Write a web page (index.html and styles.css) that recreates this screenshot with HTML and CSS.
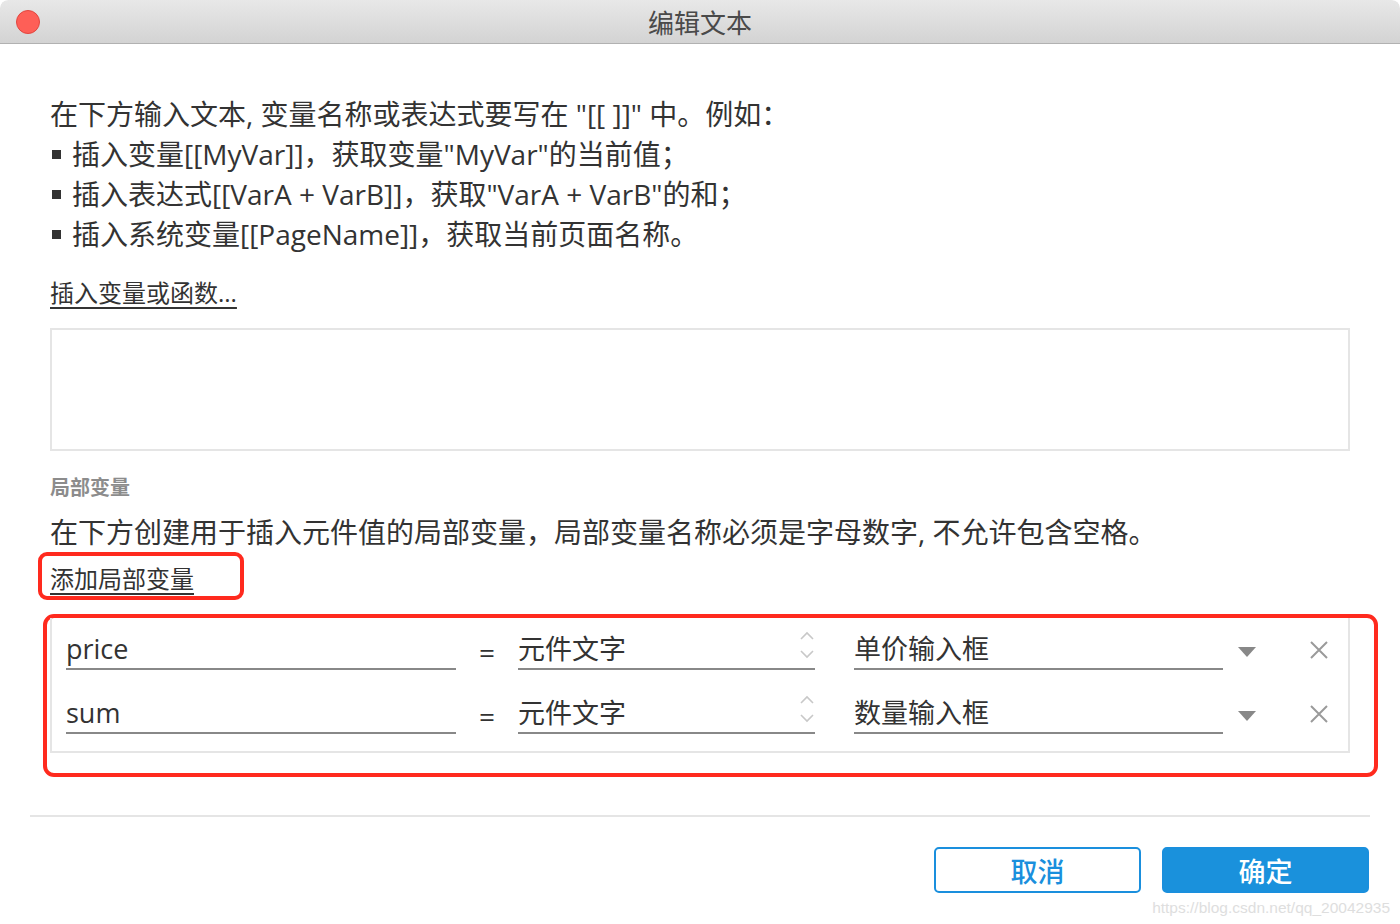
FILE: index.html
```html
<!DOCTYPE html>
<html lang="zh-CN">
<head>
<meta charset="UTF-8">
<title>编辑文本</title>
<link rel="stylesheet" href="styles.css">
</head>
<body>
  <div class="window">
    <div class="titlebar">
      <span class="close-dot"></span>
      <span class="title">编辑文本</span>
    </div>

    <div class="content">
      <div class="intro">
        <p>在下方输入文本, 变量名称或表达式要写在 "[[ ]]" 中。例如：</p>
        <p><span class="bullet"></span>插入变量[[MyVar]]，获取变量"MyVar"的当前值；</p>
        <p><span class="bullet"></span>插入表达式[[VarA + VarB]]，获取"VarA + VarB"的和；</p>
        <p><span class="bullet"></span>插入系统变量[[PageName]]，获取当前页面名称。</p>
      </div>

      <a class="link insert-link" href="#">插入变量或函数...</a>

      <div class="text-area"></div>

      <h3 class="section-label">局部变量</h3>
      <p class="desc">在下方创建用于插入元件值的局部变量，局部变量名称必须是字母数字, 不允许包含空格。</p>

      <div class="mark add-mark">
        <a class="link add-link" href="#">添加局部变量</a>
      </div>

      <div class="mark vars-mark">
        <div class="vars">
          <div class="var-row">
            <div class="field name-field">price</div>
            <div class="eq">=</div>
            <div class="field type-field">元件文字
              <svg class="spin" width="16" height="28" viewBox="0 0 16 28"><path d="M2 8 L8 2 L14 8" /><path d="M2 20 L8 26 L14 20" /></svg>
            </div>
            <div class="field target-field">单价输入框</div>
            <svg class="caret" width="18" height="10" viewBox="0 0 18 10"><path d="M0 0 H18 L9 10 Z" /></svg>
            <svg class="remove" width="18" height="18" viewBox="0 0 18 18"><path d="M1 1 L17 17 M17 1 L1 17" /></svg>
          </div>
          <div class="var-row">
            <div class="field name-field">sum</div>
            <div class="eq">=</div>
            <div class="field type-field">元件文字
              <svg class="spin" width="16" height="28" viewBox="0 0 16 28"><path d="M2 8 L8 2 L14 8" /><path d="M2 20 L8 26 L14 20" /></svg>
            </div>
            <div class="field target-field">数量输入框</div>
            <svg class="caret" width="18" height="10" viewBox="0 0 18 10"><path d="M0 0 H18 L9 10 Z" /></svg>
            <svg class="remove" width="18" height="18" viewBox="0 0 18 18"><path d="M1 1 L17 17 M17 1 L1 17" /></svg>
          </div>
        </div>
      </div>

      <hr class="divider">

      <div class="actions">
        <button class="btn btn-cancel">取消</button>
        <button class="btn btn-ok">确定</button>
      </div>
    </div>

    <div class="watermark">https://blog.csdn.net/qq_20042935</div>
  </div>
</body>
</html>
```

FILE: styles.css
```css
* {
  box-sizing: border-box;
  margin: 0;
  padding: 0;
}

body {
  font-family: "Open Sans", "Noto Sans CJK SC", sans-serif;
  color: #333;
  background: #fff;
}

.window {
  position: relative;
  width: 1400px;
  height: 924px;
  background: #fff;
  border-radius: 8px 8px 10px 10px;
  overflow: hidden;
}

.titlebar {
  height: 44px;
  display: flex;
  align-items: center;
  justify-content: center;
  position: relative;
  background: linear-gradient(#e8e8e8, #d3d3d3);
  border-bottom: 1px solid #b1b1b1;
  border-radius: 8px 8px 0 0;
}

.close-dot {
  position: absolute;
  left: 16px;
  top: 10px;
  width: 24px;
  height: 24px;
  border-radius: 50%;
  background: #fe5f57;
  border: 1px solid #e2463f;
}

.title {
  font-family: "Noto Sans CJK SC", sans-serif;
  font-size: 26px;
  color: #4a4a4a;
}

.content {
  padding: 50px 50px 0;
}

.intro p {
  font-size: 28px;
  line-height: 40px;
  display: flex;
  align-items: center;
  white-space: pre;
}

.bullet {
  display: inline-block;
  width: 9px;
  height: 9px;
  background: #333;
  margin: 0 11px 0 2px;
}

.link {
  color: #333;
  text-decoration: underline;
  text-underline-offset: 5px;
  text-decoration-thickness: 2px;
}

.insert-link {
  display: inline-block;
  margin-top: 19px;
  font-size: 24px;
  line-height: 40px;
}

.text-area {
  margin-top: 15px;
  height: 123px;
  border: 2px solid #e5e5e5;
}

.section-label {
  margin-top: 21px;
  font-family: "Noto Sans CJK SC", sans-serif;
  font-size: 20px;
  line-height: 30px;
  font-weight: bold;
  color: #8c8c8c;
}

.desc {
  margin-top: 10px;
  font-size: 28px;
  line-height: 40px;
}

.mark {
  border: 4px solid #ff2a1e;
}

.add-mark {
  width: 206px;
  height: 48px;
  margin-left: -12px;
  padding: 5px 0 0 8px;
  border-radius: 9px;
  display: flex;
  align-items: center;
}

.add-link {
  font-size: 24px;
  line-height: 32px;
}

.vars-mark {
  width: 1335px;
  margin: 14px 0 0 -7px;
  padding: 0 24px 20px 3px;
  border-radius: 11px;
}

.vars {
  border: 2px solid #e5e5e5;
  border-top: none;
  padding: 12px 0 17px 14px;
  display: flex;
  flex-direction: column;
  gap: 24px;
}

.var-row {
  display: flex;
  align-items: center;
  height: 40px;
}

.field {
  height: 40px;
  border-bottom: 2px solid #888;
  font-size: 27px;
  line-height: 38px;
  color: #333;
  display: flex;
  align-items: center;
  justify-content: space-between;
}

.name-field {
  width: 390px;
}

.eq {
  width: 62px;
  height: 40px;
  text-align: center;
  font-size: 28px;
  line-height: 44px;
}

.type-field {
  width: 297px;
}

.spin {
  fill: none;
  stroke: #c8c8c8;
  stroke-width: 1.6;
  margin-top: -8px;
}

.target-field {
  width: 369px;
  margin-left: 39px;
}

.caret {
  fill: #888;
  margin: 4px 0 0 15px;
}

.remove {
  fill: none;
  stroke: #9a9a9a;
  stroke-width: 2;
  margin: 0 0 0 54px;
}

.divider {
  border: none;
  border-top: 2px solid #e5e5e5;
  margin: 38px -20px 0;
}

.actions {
  display: flex;
  justify-content: flex-end;
  gap: 21px;
  margin: 30px -19px 0 0;
}

.btn {
  width: 207px;
  height: 46px;
  border-radius: 5px;
  font-family: "Noto Sans CJK SC", sans-serif;
  font-size: 27px;
  font-weight: 500;
  border: 2px solid #1a8fdd;
}

.btn-cancel {
  background: #fff;
  color: #1a8fdd;
}

.btn-ok {
  background: #1a91dc;
  color: #fff;
}

.watermark {
  position: absolute;
  right: 10px;
  bottom: 7px;
  font-family: "Liberation Sans", sans-serif;
  font-size: 15.5px;
  color: #dedede;
}
```
